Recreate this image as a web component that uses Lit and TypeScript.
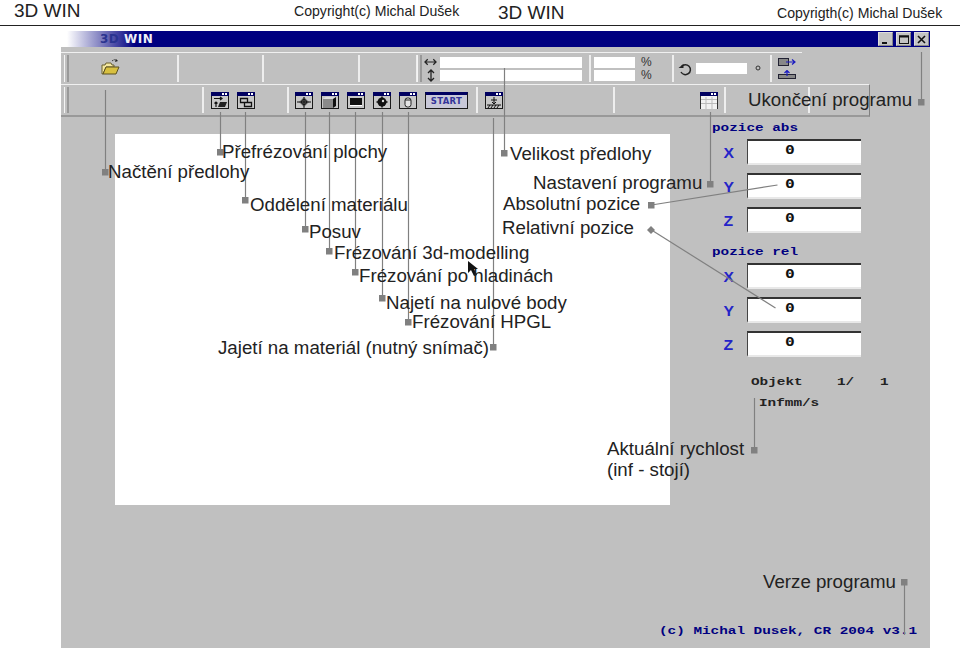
import { LitElement, html, css, svg } from "lit";
import { customElement } from "lit/decorators.js";

const notes: [string, number, number][] = [
  ["Načtění předlohy", 108, 172],
  ["Přefrézování plochy", 222, 152],
  ["Oddělení materiálu", 250, 205],
  ["Posuv", 309, 232],
  ["Frézování 3d-modelling", 334, 253],
  ["Frézování po hladinách", 359, 276],
  ["Najetí na nulové body", 386, 303],
  ["Frézování HPGL", 412, 322],
  ["Jajetí na materiál (nutný snímač)", 218, 348],
  ["Velikost předlohy", 510, 154],
  ["Nastavení programu", 533, 183],
  ["Absolutní pozice", 503, 204],
  ["Relativní pozice", 502, 228],
  ["Aktuální rychlost", 607, 449],
  ["(inf - stojí)", 607, 470],
  ["Verze programu", 763, 582],
  ["Ukončení programu", 748, 100],
];

// x1,y1 -> x2,y2 leader lines
const leaders: number[][] = [
  [105, 90, 105, 172], [220, 112, 220, 152], [245, 112, 245, 200], [305, 112, 305, 229],
  [329, 112, 329, 251], [355, 112, 355, 272], [382, 112, 382, 298], [408, 112, 408, 322],
  [493, 118, 493, 347], [504, 68, 504, 153], [710, 112, 710, 184], [921, 52, 921, 102],
  [651, 205, 777, 185], [651, 230, 775, 308], [754, 398, 754, 450], [904, 582, 904, 635],
];
const dots: number[][] = [
  [105, 172], [220, 152], [245, 200], [305, 229], [329, 251], [355, 272], [382, 298], [408, 322],
  [493, 347], [504, 153], [710, 184], [921, 102], [651, 205], [754, 450], [904, 582],
];

const win = (body: unknown, title = "#000060") => html`<svg class="ico" width="18" height="17" viewBox="0 0 18 17">
  <rect x=".5" y=".5" width="17" height="16" fill="#c8c8c8" stroke="#1a1a1a"/>
  <rect x="0" y="0" width="18" height="4" fill="${title}"/>
  <rect x="11" y="1" width="2" height="2" fill="#fff"/><rect x="14" y="1" width="2" height="2" fill="#fff"/>
  ${body}
</svg>`;

const icons = {
  refrez: win(svg`<path d="M3 6.500h8M9 5l2 1.500-2 1.500M5 10v5M3.500 11.500 5 10l1.500 1.500" fill="none" stroke="#111" stroke-width="1.200"/><path d="M7 15l2-5h7l-2 5z" fill="#222"/>`),
  split: win(svg`<path d="M3.500 6.500h7v4h-7zM7.500 10.500h7v4h-7z" fill="none" stroke="#111" stroke-width="1.300"/>`),
  cross: win(svg`<path d="M9 5l5 5-5 5-5-5z" fill="#777"/><path d="M9 5v11M2 10h14" stroke="#111"/><circle cx="9" cy="10" r="2.500" fill="none" stroke="#111"/>`),
  box: win(svg`<rect x="2" y="7" width="10" height="9" fill="#8a8a8a"/><path d="M2 7l3-2h10l-3 2z" fill="#ddd"/><path d="M12 7l3-2v9l-3 2z" fill="#111"/>`),
  screen: win(svg`<rect x="3" y="6" width="12" height="7" fill="#111"/><rect x="3" y="13" width="12" height="1" fill="#fff"/>`),
  gear: win(svg`<circle cx="9" cy="10" r="4.500" fill="#111"/><path d="M9 4.500v11M3.500 10h11" stroke="#111" stroke-width="1.500"/><circle cx="10" cy="9" r="1.200" fill="#ddd"/>`),
  cyl: win(svg`<rect x="6" y="6" width="6" height="9" rx="2.500" fill="#e4e4e4" stroke="#222"/><path d="M6 8h6" stroke="#222"/>`),
  hatch: win(svg`<path d="M9 5v7M6 8h6M7 10l2 2 2-2" stroke="#111" fill="none"/><path d="M2 13h14" stroke="#111"/><path d="M3 16l2-3M6 16l2-3M9 16l2-3M12 16l2-3" stroke="#111"/>`),
  table: html`<svg class="ico" width="18" height="17" viewBox="0 0 18 17">
    <rect width="18" height="17" fill="#f2f2f2"/>
    <rect width="18" height="4" fill="#000060"/>
    <rect x="11" y="1" width="2" height="2" fill="#fff"/><rect x="14" y="1" width="2" height="2" fill="#fff"/>
    <path d="M1 7.500h16M1 11.500h16M6 5v12M12 5v12" stroke="#bbb"/>
    <path d="M.5 4v13M17.500 4v13" stroke="#333"/>
  </svg>`,
  folder: html`<svg width="20" height="18" viewBox="0 0 20 18">
    <path d="M1 7h3l1-2h5l1 2h2v2H5L2 16H1z" fill="#f4e8a0" stroke="#6a6030"/>
    <path d="M2 16l3-7h13l-3 7z" fill="#d8c040" stroke="#5a5020"/>
    <path d="M11 3q3-2.500 5 0" fill="none" stroke="#222" stroke-dasharray="1.500 1"/><path d="M15 1l2 2-3 1z" fill="#222"/>
  </svg>`,
  hArrow: html`<svg width="14" height="8" viewBox="0 0 14 8"><path d="M1 4h12M4 1 1 4l3 3M10 1l3 3-3 3" fill="none" stroke="#222" stroke-width="1.300"/></svg>`,
  vArrow: html`<svg width="8" height="13" viewBox="0 0 8 13"><path d="M4 1v11M1 4l3-3 3 3M1 9l3 3 3-3" fill="none" stroke="#222" stroke-width="1.300"/></svg>`,
  rotate: html`<svg width="14" height="14" viewBox="0 0 14 14"><path d="M3.500 4.500A5 5 0 1 1 3 10" fill="none" stroke="#222" stroke-width="1.500"/><path d="M.5 6h5V2z" fill="#222"/></svg>`,
  toRight: html`<svg width="18" height="8" viewBox="0 0 18 8"><rect x=".5" y=".5" width="10" height="7" fill="#888" stroke="#223"/><path d="M8 4h9M14 1.500 17 4l-3 2.500" fill="none" stroke="#1a1ac0" stroke-width="1.200"/></svg>`,
  toUp: html`<svg width="18" height="9" viewBox="0 0 18 9"><rect x=".5" y="4.500" width="17" height="4" fill="#888" stroke="#223"/><path d="M9 6V1M6.500 3 9 .5 11.500 3" fill="none" stroke="#1a1ac0" stroke-width="1.200"/></svg>`,
};

const rows = ["X", "Y", "Z"];

@customElement("app-root")
export class AppRoot extends LitElement {
  static styles = css`
    :host { display: block; width: 960px; height: 649px; position: relative; background: #fff; overflow: hidden; font-family: "Liberation Sans", Arial, sans-serif; color: #222; }
    .top { height: 25px; display: grid; grid-template-columns: 280px 204px 279px 1fr; padding-left: 14px; align-items: center; border-bottom: 1px solid #222; }
    .brand { font-size: 19px; }
    .copy { font-size: 14.100px; }
    .up { margin-bottom: 4px; }
    .window { margin: 5px 30px 0 61px; height: 617px; background: #c0c0c0; display: flex; flex-direction: column; }
    .title { height: 16px; flex: none; background: linear-gradient(90deg, #fff 6px, #000080 74px); display: flex; align-items: center; padding-left: 39px; font: bold 12px "DejaVu Sans", sans-serif; letter-spacing: .5px; }
    .title .a { color: #2a3490; }
    .title .b { color: #f0f0f8; }
    .btns { margin-left: auto; display: flex; gap: 3px; margin-right: 1px; }
    .btn { width: 15px; height: 14px; background: #c4c4c4; border: 1px solid; border-color: #ddd #888 #888 #ddd; box-sizing: border-box; display: flex; align-items: center; justify-content: center; }
    .tb { flex: none; display: flex; box-sizing: border-box; }
    .tb1 { height: 32px; margin-top: 5px; width: 741px; border-top: 1px solid #f0f0f0; align-items: stretch; }
    .tb2 { height: 33px; width: 809px; border-top: 1px solid #f0f0f0; border-right: 1px solid #808080; border-bottom: 2px solid #999; }
    .sec { flex: none; box-sizing: border-box; border-right: 2px solid #eee; margin: 2px 0; display: flex; align-items: center; gap: 8px; position: relative; }
    .sec.last { border-right: 0; }
    .grip { flex: none; width: 2px; height: 100%; border-left: 1px solid #f4f4f4; border-right: 2px solid #999; margin: 0 0 0 3px; }
    .stack { display: flex; flex-direction: column; gap: 2px; }
    .inp { background: #fff; height: 11px; display: block; }
    .inp.w { width: 142px; }
    .inp.m { width: 41px; }
    .inp.s { width: 51px; }
    .ctr { width: 13px; height: 11px; display: flex; align-items: center; justify-content: center; }
    .pct { font-size: 12px; line-height: 11px; height: 11px; color: #333; }
    .ico { display: block; flex: none; }
    .start { width: 43px; height: 17px; box-sizing: border-box; border: 1px solid #1a1a1a; border-top: 3px solid #000060; background: #c8c8d8; color: #34349a; font: bold 8.500px/12px "DejaVu Sans", sans-serif; letter-spacing: .3px; text-align: center; flex: none; }
    .main { flex: 1; display: flex; padding: 5px 0 0 54px; }
    .canvas { width: 555px; height: 371px; margin-top: 12px; background: #fff; flex: none; }
    .panel { margin-left: 42px; width: 149px; display: flex; flex-direction: column; }
    .head { color: #000080; height: 12px; margin-bottom: 5px; }
    .group { display: grid; grid-template-columns: 35px 114px; grid-auto-rows: 26px; row-gap: 8px; margin-bottom: 13px; }
    .px { font: bold 11px/12px "Liberation Mono", monospace; transform: scaleX(1.303); transform-origin: left center; white-space: pre; display: block; }
    .ax { color: #2424c8; font: bold 15px/28px "Liberation Sans", sans-serif; padding-left: 11px; transform: scaleX(1.050); transform-origin: left center; }
    .field { background: #fff; box-sizing: border-box; border-top: 2px solid #333; border-left: 1px solid #444; border-bottom: 2px solid #e8e8e8; padding-left: 37px; color: #111; }
    .zero { display: block; width: 8px; font: bold 13px/18px "DejaVu Sans Mono", monospace; transform: scaleX(1.250); transform-origin: left center; }
    .obj { margin: 6px 0 0 39px; color: #222; height: 12px; }
    .inf { margin: 9px 0 0 47px; color: #222; height: 12px; }
    .foot { flex: none; height: 23px; padding-left: 598px; color: #000080; }
    .overlay { position: absolute; inset: 0; pointer-events: none; }
    .overlay svg { position: absolute; inset: 0; }
    .note { position: absolute; font-size: 18.700px; line-height: 20px; white-space: nowrap; color: #222; }
  `;

  private group() {
    return html`<div class="group">${rows.map(
      (r) => html`<div class="ax">${r}</div><div class="field"><span class="zero">0</span></div>`
    )}</div>`;
  }

  render() {
    return html`
      <div class="top">
        <span class="brand up">3D WIN</span><span class="copy up">Copyright(c) Michal Dušek</span>
        <span class="brand">3D WIN</span><span class="copy">Copyrigth(c) Michal Dušek</span>
      </div>
      <div class="window">
        <div class="title"><span class="a">3D&nbsp;</span><span class="b">WIN</span>
          <div class="btns">
            <span class="btn"><svg width="9" height="9"><path d="M1 8h5" stroke="#111" stroke-width="2"/></svg></span>
            <span class="btn"><svg width="10" height="9"><rect x=".5" y="1" width="9" height="7.500" fill="none" stroke="#111"/><path d="M0 1.500h10" stroke="#111" stroke-width="2"/></svg></span>
            <span class="btn"><svg width="9" height="9"><path d="M1 1l7 7M8 1l-7 7" stroke="#111" stroke-width="1.600"/></svg></span>
          </div>
        </div>
        <div class="tb tb1">
          <div class="sec" style="width:118px"><i class="grip"></i><span style="margin-left:24px">${icons.folder}</span></div>
          <div class="sec" style="width:85px"></div>
          <div class="sec" style="width:96px"></div>
          <div class="sec" style="width:58px"></div>
          <div class="sec" style="width:173px;gap:2px">
            <i class="grip" style="margin-left:-1px"></i>
            <div class="stack"><span class="ctr">${icons.hArrow}</span><span class="ctr">${icons.vArrow}</span></div>
            <div class="stack" style="margin-left:1px"><span class="inp w"></span><span class="inp w"></span></div>
          </div>
          <div class="sec" style="width:83px;gap:6px;padding-left:3px">
            <div class="stack"><span class="inp m"></span><span class="inp m"></span></div>
            <div class="stack"><span class="pct">%</span><span class="pct">%</span></div>
          </div>
          <div class="sec" style="width:98px;gap:4px;padding-left:4px">
            ${icons.rotate}<span class="inp s"></span><svg width="8" height="8" style="margin-left:3px"><circle cx="4" cy="3" r="2" fill="none" stroke="#333"/></svg>
          </div>
          <div class="sec last" style="width:32px;padding-left:6px">
            <div class="stack" style="gap:4px">${icons.toRight}${icons.toUp}</div>
          </div>
        </div>
        <div class="tb tb2">
          <div class="sec" style="width:143px"><i class="grip"></i></div>
          <div class="sec" style="width:85px;padding-left:7px">${icons.refrez}${icons.split}</div>
          <div class="sec" style="width:189px;padding-left:6px">${icons.cross}${icons.box}${icons.screen}${icons.gear}${icons.cyl}<span class="start">START</span></div>
          <div class="sec" style="width:137px;padding-left:7px">${icons.hatch}</div>
          <div class="sec" style="width:111px;padding-left:85px">${icons.table}</div>
          <div class="sec" style="width:84px"></div>
        </div>
        <div class="main">
          <div class="canvas"></div>
          <div class="panel">
            <div class="head px">pozice abs</div>
            ${this.group()}
            <div class="head px">pozice rel</div>
            ${this.group()}
            <div class="obj px">Objekt    1/   1</div>
            <div class="inf px">Infmm/s</div>
          </div>
        </div>
        <div class="foot"><span class="px">(c) Michal Dusek, CR 2004 v3.1</span></div>
      </div>
      <div class="overlay">
        <svg width="960" height="649" viewBox="0 0 960 649">
          ${leaders.map(([a, b, c, d]) => svg`<line x1=${a + 0.5} y1=${b} x2=${c + 0.5} y2=${d} stroke="#808080" stroke-width="1.200"/>`)}
          ${dots.map(([x, y]) => svg`<rect x=${x - 3} y=${y - 3} width="6.500" height="6.500" fill="#808080"/>`)}
          <path d="M651 226l4 4-4 4-4-4z" fill="#808080"/>
          <path d="M468 261v12l3-3 3 6 3-1-3-6h4z" fill="#111"/>
        </svg>
        ${notes.map(([t, x, y]) => html`<div class="note" style="left:${x}px;top:${y - 10}px">${t}</div>`)}
      </div>
    `;
  }
}
